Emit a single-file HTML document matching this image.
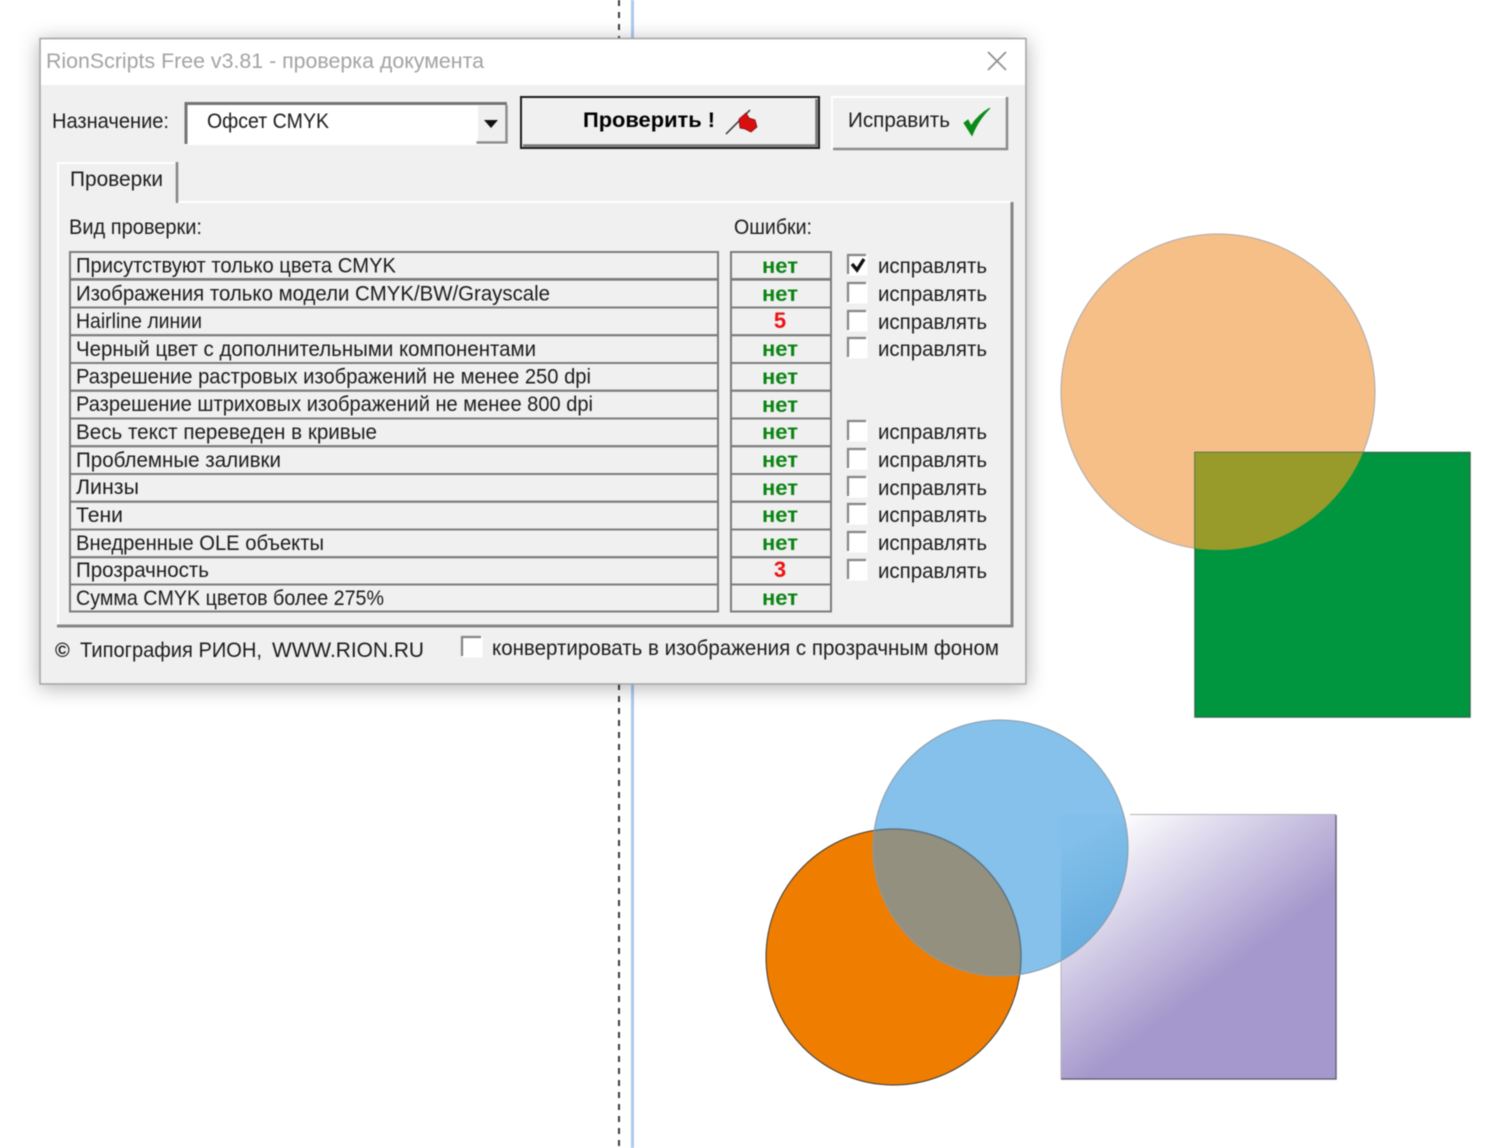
<!DOCTYPE html>
<html lang="ru">
<head>
<meta charset="utf-8">
<title>RionScripts Free v3.81</title>
<style>
html,body{margin:0;padding:0;background:#fff;width:1500px;height:1148px;overflow:hidden}
svg{display:block;filter:blur(.5px)}
text{font-family:"Liberation Sans",sans-serif;font-size:21px;fill:#1c1c1c}
.n{font-weight:bold;fill:#0b8413;font-size:21px;text-anchor:middle}
.r{font-weight:bold;fill:#f01010;font-size:22px;text-anchor:middle}
.row{fill:none;stroke:#7c7c7c;stroke-width:2}
</style>
</head>
<body>
<svg width="1500" height="1148" viewBox="0 0 1500 1148" xmlns="http://www.w3.org/2000/svg">
<defs>
<linearGradient id="pg" gradientUnits="userSpaceOnUse" x1="1100" y1="830" x2="1215" y2="980">
<stop offset="0" stop-color="#ffffff"/><stop offset="1" stop-color="#a598cc"/>
</linearGradient>
<linearGradient id="bg" gradientUnits="userSpaceOnUse" x1="1061" y1="850" x2="1125" y2="960">
<stop offset="0" stop-color="#82bfea"/><stop offset="1" stop-color="#5ea8dc"/>
</linearGradient>
<clipPath id="cPeach"><ellipse cx="1218" cy="392" rx="157" ry="158"/></clipPath>
<clipPath id="cBlue"><ellipse cx="1000.5" cy="848" rx="127.5" ry="128"/></clipPath>
<filter id="sh" x="-10%" y="-10%" width="120%" height="120%"><feDropShadow dx="0" dy="3" stdDeviation="10" flood-color="#000" flood-opacity=".3"/></filter>
</defs>

<!-- guides -->
<line x1="619" y1="0" x2="619" y2="1148" stroke="#3a3a3a" stroke-width="2" stroke-dasharray="6 6"/>
<rect x="631" y="0" width="3" height="1148" fill="#a9cbee"/>

<!-- top shapes -->
<ellipse cx="1218" cy="392" rx="157" ry="158" fill="#f6bf88" stroke="#a9a9a9" stroke-width="1"/>
<rect x="1195" y="452.500" width="275" height="264.500" fill="#009640"/>
<path d="M1195 452.500H1470V717H1195Z" fill="none" stroke="#2f6b48" stroke-width="1.500"/>
<rect x="1195" y="452.500" width="275" height="264.500" fill="#989a2a" clip-path="url(#cPeach)"/>

<!-- bottom shapes -->
<rect x="1061" y="814.500" width="275" height="264" fill="url(#pg)"/>
<path d="M1061 1079H1336V815" fill="none" stroke="#66647a" stroke-width="1.500"/>
<path d="M1061 1079V960M1130 814.500H1336" fill="none" stroke="#b5b3bb" stroke-width="1"/>
<ellipse cx="893.500" cy="957" rx="127.500" ry="128" fill="#ef7d00" stroke="#3a3a3a" stroke-width="1"/>
<ellipse cx="1000.500" cy="848" rx="127.500" ry="128" fill="#85c1eb"/>
<g clip-path="url(#cBlue)">
<ellipse cx="893.500" cy="957" rx="127.500" ry="128" fill="#93907f" stroke="#5d7482" stroke-width="1.500"/>
<rect x="1061" y="814.500" width="275" height="264" fill="url(#bg)"/>
</g>
<ellipse cx="1000.500" cy="848" rx="127.500" ry="128" fill="none" stroke="#8c9aa6" stroke-width="1"/>

<!-- window -->
<rect x="40" y="38.500" width="986" height="645.500" fill="#f0f0f0" stroke="#a3a3a3" stroke-width="1.500" filter="url(#sh)"/>
<rect x="41" y="39.500" width="984" height="45.500" fill="#fff"/>
<path d="M988 52L1006 70M1006 52L988 70" stroke="#8e8e8e" stroke-width="1.600" fill="none"/>

<!-- combo -->
<rect x="185" y="102" width="323" height="43" fill="#fff"/>
<path d="M186 144V103.500H507" fill="none" stroke="#747474" stroke-width="3"/>
<path d="M478 106H505V141H478Z" fill="#efefef"/>
<path d="M476.500 142.500H506.500V105" fill="none" stroke="#8c8c8c" stroke-width="2.500"/>
<path d="M484 120H498L491 128Z" fill="#111"/>

<!-- check button -->
<rect x="521" y="97" width="298" height="51" fill="#f0f0f0" stroke="#1b1b1b" stroke-width="2"/>
<path d="M523 145.500H816.500V99" fill="none" stroke="#777" stroke-width="2.500"/>
<path d="M726 134L750 110" stroke="#333" stroke-width="1.500"/>
<path d="M739 119L746 113L749 118L755 120L757 127L751 132L745 129L740 128Z" fill="#d90f0f" stroke="#7a1010" stroke-width=".8"/>

<!-- fix button -->
<rect x="832" y="97" width="176" height="53" fill="#f0f0f0"/>
<path d="M832 150V97H1006" fill="none" stroke="#fff" stroke-width="2"/>
<path d="M833 149H1007V97" fill="none" stroke="#8c8c8c" stroke-width="2.500"/>
<path d="M964 123L972 135.500C976 125 982 116 990 108C983 112 976 118 971 126L968 120Z" fill="#0b8a18" stroke="#0b8a18" stroke-width="1"/>

<!-- panel and tab -->
<path d="M58 626V202H1012" fill="none" stroke="#fff" stroke-width="2"/>
<path d="M57 626H1012V202" fill="none" stroke="#858585" stroke-width="3"/>
<path d="M58 204V163H175" fill="none" stroke="#fff" stroke-width="2"/>
<rect x="59" y="164" width="116" height="40" fill="#f0f0f0"/>
<path d="M177 162V203" fill="none" stroke="#858585" stroke-width="2.500"/>

<!-- grid -->
<g class="row">
<rect x="70" y="252" width="648" height="27"/><rect x="70" y="279.700" width="648" height="27.800"/><rect x="70" y="307.500" width="648" height="27.700"/><rect x="70" y="335.200" width="648" height="27.800"/><rect x="70" y="363" width="648" height="27.700"/><rect x="70" y="390.700" width="648" height="27.800"/><rect x="70" y="418.500" width="648" height="27.700"/><rect x="70" y="446.200" width="648" height="27.800"/><rect x="70" y="474" width="648" height="27.700"/><rect x="70" y="501.700" width="648" height="27.800"/><rect x="70" y="529.500" width="648" height="27.700"/><rect x="70" y="557.200" width="648" height="27.300"/><rect x="70" y="584.500" width="648" height="27"/>
<rect x="731" y="252" width="100" height="27"/><rect x="731" y="279.700" width="100" height="27.800"/><rect x="731" y="307.500" width="100" height="27.700"/><rect x="731" y="335.200" width="100" height="27.800"/><rect x="731" y="363" width="100" height="27.700"/><rect x="731" y="390.700" width="100" height="27.800"/><rect x="731" y="418.500" width="100" height="27.700"/><rect x="731" y="446.200" width="100" height="27.800"/><rect x="731" y="474" width="100" height="27.700"/><rect x="731" y="501.700" width="100" height="27.800"/><rect x="731" y="529.500" width="100" height="27.700"/><rect x="731" y="557.200" width="100" height="27.300"/><rect x="731" y="584.500" width="100" height="27"/>
</g>

<!-- checkboxes -->
<g fill="#fff" stroke="#fff" stroke-width="1">
<rect x="848" y="255" width="19" height="20"/><rect x="848" y="283" width="19" height="20"/><rect x="848" y="311" width="19" height="20"/><rect x="848" y="338" width="19" height="20"/><rect x="848" y="421" width="19" height="20"/><rect x="848" y="449" width="19" height="20"/><rect x="848" y="477" width="19" height="20"/><rect x="848" y="504" width="19" height="20"/><rect x="848" y="532" width="19" height="20"/><rect x="848" y="560" width="19" height="20"/><rect x="462" y="637" width="20" height="20"/>
</g>
<g fill="none" stroke="#858585" stroke-width="2.200">
<path d="M848 274V255H866"/><path d="M848 302V283H866"/><path d="M848 330V311H866"/><path d="M848 357V338H866"/><path d="M848 440V421H866"/><path d="M848 468V449H866"/><path d="M848 496V477H866"/><path d="M848 523V504H866"/><path d="M848 551V532H866"/><path d="M848 579V560H866"/><path d="M462 656V637H481"/>
</g>
<path d="M852 264L857 270L864 259" fill="none" stroke="#111" stroke-width="3.400"/>

<!-- text -->
<g>
<text x="46" y="68" textLength="438" lengthAdjust="spacingAndGlyphs" style="fill:#a3a3a3">RionScripts Free v3.81 - проверка документа</text>
<text x="52" y="128" textLength="117" lengthAdjust="spacingAndGlyphs">Назначение:</text>
<text x="207" y="128" textLength="122" lengthAdjust="spacingAndGlyphs">Офсет CMYK</text>
<text x="583" y="127" textLength="132" lengthAdjust="spacingAndGlyphs" style="font-weight:bold;fill:#000">Проверить !</text>
<text x="848" y="127" textLength="102" lengthAdjust="spacingAndGlyphs">Исправить</text>
<text x="70" y="186" textLength="93" lengthAdjust="spacingAndGlyphs">Проверки</text>
<text x="69" y="234" textLength="133" lengthAdjust="spacingAndGlyphs">Вид проверки:</text>
<text x="734" y="234" textLength="78" lengthAdjust="spacingAndGlyphs">Ошибки:</text>

<text x="76" y="272.500" textLength="320" lengthAdjust="spacingAndGlyphs">Присутствуют только цвета CMYK</text>
<text x="76" y="300.500" textLength="474" lengthAdjust="spacingAndGlyphs">Изображения только модели CMYK/BW/Grayscale</text>
<text x="76" y="328" textLength="126" lengthAdjust="spacingAndGlyphs">Hairline линии</text>
<text x="76" y="356" textLength="460" lengthAdjust="spacingAndGlyphs">Черный цвет с дополнительными компонентами</text>
<text x="76" y="383.500" textLength="515" lengthAdjust="spacingAndGlyphs">Разрешение растровых изображений не менее 250 dpi</text>
<text x="76" y="411" textLength="517" lengthAdjust="spacingAndGlyphs">Разрешение штриховых изображений не менее 800 dpi</text>
<text x="76" y="439" textLength="301" lengthAdjust="spacingAndGlyphs">Весь текст переведен в кривые</text>
<text x="76" y="467" textLength="205" lengthAdjust="spacingAndGlyphs">Проблемные заливки</text>
<text x="76" y="494" textLength="63" lengthAdjust="spacingAndGlyphs">Линзы</text>
<text x="76" y="522" textLength="47" lengthAdjust="spacingAndGlyphs">Тени</text>
<text x="76" y="550" textLength="248" lengthAdjust="spacingAndGlyphs">Внедренные OLE объекты</text>
<text x="76" y="577" textLength="133" lengthAdjust="spacingAndGlyphs">Прозрачность</text>
<text x="76" y="605" textLength="308" lengthAdjust="spacingAndGlyphs">Сумма CMYK цветов более 275%</text>

<text class="n" x="780" y="273" textLength="36" lengthAdjust="spacingAndGlyphs">нет</text>
<text class="n" x="780" y="301" textLength="36" lengthAdjust="spacingAndGlyphs">нет</text>
<text class="r" x="780" y="328">5</text>
<text class="n" x="780" y="356" textLength="36" lengthAdjust="spacingAndGlyphs">нет</text>
<text class="n" x="780" y="384" textLength="36" lengthAdjust="spacingAndGlyphs">нет</text>
<text class="n" x="780" y="412" textLength="36" lengthAdjust="spacingAndGlyphs">нет</text>
<text class="n" x="780" y="439" textLength="36" lengthAdjust="spacingAndGlyphs">нет</text>
<text class="n" x="780" y="467" textLength="36" lengthAdjust="spacingAndGlyphs">нет</text>
<text class="n" x="780" y="495" textLength="36" lengthAdjust="spacingAndGlyphs">нет</text>
<text class="n" x="780" y="522" textLength="36" lengthAdjust="spacingAndGlyphs">нет</text>
<text class="n" x="780" y="550" textLength="36" lengthAdjust="spacingAndGlyphs">нет</text>
<text class="r" x="780" y="577">3</text>
<text class="n" x="780" y="605" textLength="36" lengthAdjust="spacingAndGlyphs">нет</text>

<text x="878" y="273" textLength="109" lengthAdjust="spacingAndGlyphs">исправлять</text>
<text x="878" y="301" textLength="109" lengthAdjust="spacingAndGlyphs">исправлять</text>
<text x="878" y="329" textLength="109" lengthAdjust="spacingAndGlyphs">исправлять</text>
<text x="878" y="356" textLength="109" lengthAdjust="spacingAndGlyphs">исправлять</text>
<text x="878" y="439" textLength="109" lengthAdjust="spacingAndGlyphs">исправлять</text>
<text x="878" y="467" textLength="109" lengthAdjust="spacingAndGlyphs">исправлять</text>
<text x="878" y="495" textLength="109" lengthAdjust="spacingAndGlyphs">исправлять</text>
<text x="878" y="522" textLength="109" lengthAdjust="spacingAndGlyphs">исправлять</text>
<text x="878" y="550" textLength="109" lengthAdjust="spacingAndGlyphs">исправлять</text>
<text x="878" y="578" textLength="109" lengthAdjust="spacingAndGlyphs">исправлять</text>

<text x="55" y="657" style="font-size:20px;font-weight:bold">©</text>
<text x="80" y="657" textLength="182" lengthAdjust="spacingAndGlyphs">Типография РИОН,</text>
<text x="272" y="657" textLength="152" lengthAdjust="spacingAndGlyphs">WWW.RION.RU</text>
<text x="492" y="655" textLength="507" lengthAdjust="spacingAndGlyphs">конвертировать в изображения с прозрачным фоном</text>
</g>
</svg>
</body>
</html>
